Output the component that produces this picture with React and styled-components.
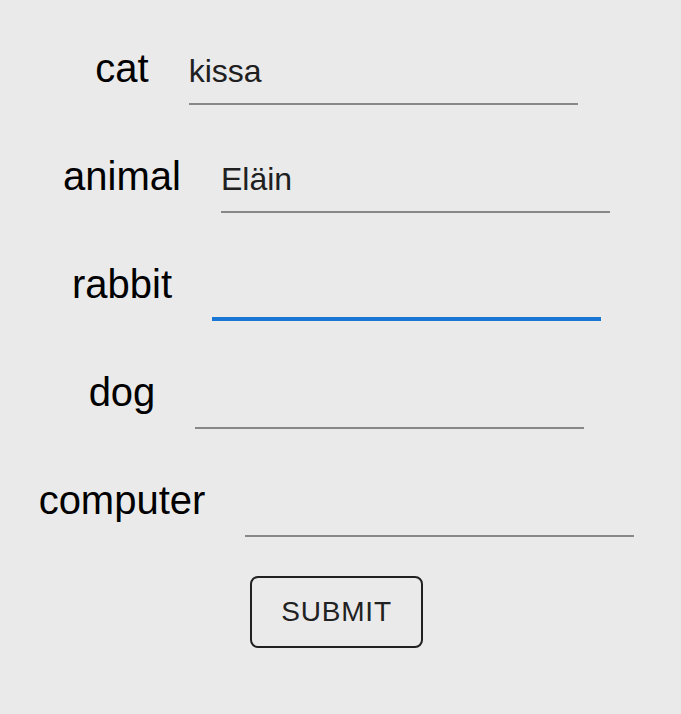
import React, { useEffect, useRef, useState } from 'react';
import styled, { createGlobalStyle } from 'styled-components';

const GlobalStyle = createGlobalStyle`
  body {
    margin: 0;
    background: #eaeaea;
    font-family: "Liberation Sans", Arial, sans-serif;
  }
`;

const words = [
  { key: 'cat', value: 'kissa' },
  { key: 'animal', value: 'Eläin' },
  { key: 'rabbit', value: '' },
  { key: 'dog', value: '' },
  { key: 'computer', value: '' },
];

const App = () => {
  const [answers, setAnswers] = useState(
    words.reduce((acc, w) => ({ ...acc, [w.key]: w.value }), {})
  );
  const rabbitRef = useRef(null);

  useEffect(() => {
    if (rabbitRef.current) rabbitRef.current.focus();
  }, []);

  const handleChange = (key) => (e) => {
    setAnswers((prev) => ({ ...prev, [key]: e.target.value }));
  };

  return (
    <>
      <GlobalStyle />
      <Form onSubmit={(e) => e.preventDefault()}>
        {words.map((w) => (
          <Row key={w.key}>
            <Label htmlFor={w.key}>{w.key}</Label>
            <Input
              id={w.key}
              ref={w.key === 'rabbit' ? rabbitRef : null}
              value={answers[w.key]}
              onChange={handleChange(w.key)}
            />
          </Row>
        ))}
        <SubmitButton type="submit">Submit</SubmitButton>
      </Form>
    </>
  );
};

const Form = styled.form`
  display: flex;
  flex-direction: column;
  align-items: center;
  padding: 45px 8px 0 0;
`;

const Row = styled.div`
  display: flex;
  align-items: baseline;
  justify-content: center;
  gap: 40px;
  height: 108px;
`;

const Label = styled.label`
  font-size: 40px;
  line-height: 46px;
  color: #000;
`;

const Input = styled.input`
  width: 389px;
  box-sizing: border-box;
  font-family: "Liberation Sans", Arial, sans-serif;
  font-size: 32px;
  line-height: 36px;
  height: 51px;
  padding: 0 0 13px;
  border: none;
  border-bottom: 2px solid #888;
  background: transparent;
  color: #202020;
  outline: none;
  caret-color: #202020;

  &:focus {
    border-bottom-color: #1976d2;
    box-shadow: inset 0 -2px 0 #1976d2;
  }
`;

const SubmitButton = styled.button`
  margin-top: -9px;
  width: 173px;
  height: 72px;
  box-sizing: border-box;
  border: 2px solid #212121;
  border-radius: 8px;
  background: transparent;
  color: #212121;
  font-family: "Liberation Sans", Arial, sans-serif;
  font-size: 28px;
  letter-spacing: 0.8px;
  text-transform: uppercase;
  cursor: pointer;
`;

export default App;
